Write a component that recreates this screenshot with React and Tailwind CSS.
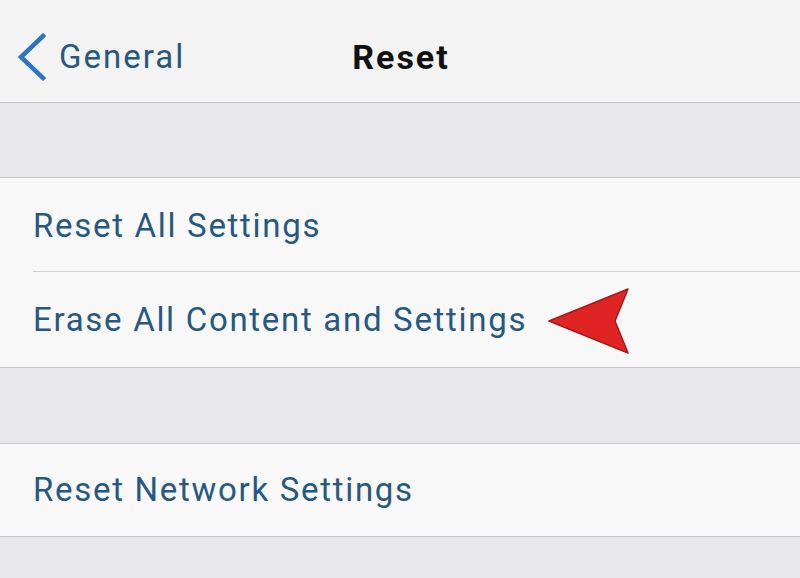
export default function App() {
  const font = { fontFamily: 'Roboto, "Liberation Sans", sans-serif' };
  return (
    <div className="w-[800px] h-[578px] overflow-hidden bg-[#e8e8ea]" style={font}>
      {/* Nav bar */}
      <div className="relative h-[103px] bg-[#f3f3f3] border-b border-[#c4c4c8] flex items-center">
        <div className="flex items-center pl-[17px] pt-[12px]">
          <svg width="30" height="48" viewBox="0 0 30 48" className="mr-[12px]">
            <path d="M26 3 L4 24 L26 45" fill="none" stroke="#2f73c4" strokeWidth="4.5" strokeLinecap="square" />
          </svg>
          <span className="text-[33px] text-[#28587f] tracking-[2px]">General</span>
        </div>
        <div className="absolute inset-x-0 top-0 h-full flex items-center justify-center pt-[12px] pointer-events-none">
          <span className="text-[34px] font-bold text-[#111] tracking-[2px] ml-[2px]">Reset</span>
        </div>
      </div>

      <div className="h-[74px]" />

      {/* Group 1 */}
      <div className="bg-[#f8f8f8] border-y border-[#c8c8cc]">
        <div className="h-[94px] flex items-center ml-[33px] border-b border-[#d2d2d6]">
          <span className="text-[33px] text-[#28587f] tracking-[1.7px] pt-[2px]">Reset All Settings</span>
        </div>
        <div className="h-[95px] flex items-center pl-[33px]">
          <span className="text-[33px] text-[#28587f] tracking-[1.7px]">Erase All Content and Settings</span>
          <svg width="84" height="68" viewBox="0 0 84 68" className="ml-[20px] mt-[4px]">
            <polygon points="2,33 81,1 68,33 81,65" fill="#e02424" stroke="#a81818" strokeWidth="1.5" strokeLinejoin="round" />
          </svg>
        </div>
      </div>

      <div className="h-[75px]" />

      {/* Group 2 */}
      <div className="bg-[#f8f8f8] border-y border-[#c8c8cc]">
        <div className="h-[92px] flex items-center pl-[33px]">
          <span className="text-[33px] text-[#28587f] tracking-[1.7px]">Reset Network Settings</span>
        </div>
      </div>
    </div>
  );
}
